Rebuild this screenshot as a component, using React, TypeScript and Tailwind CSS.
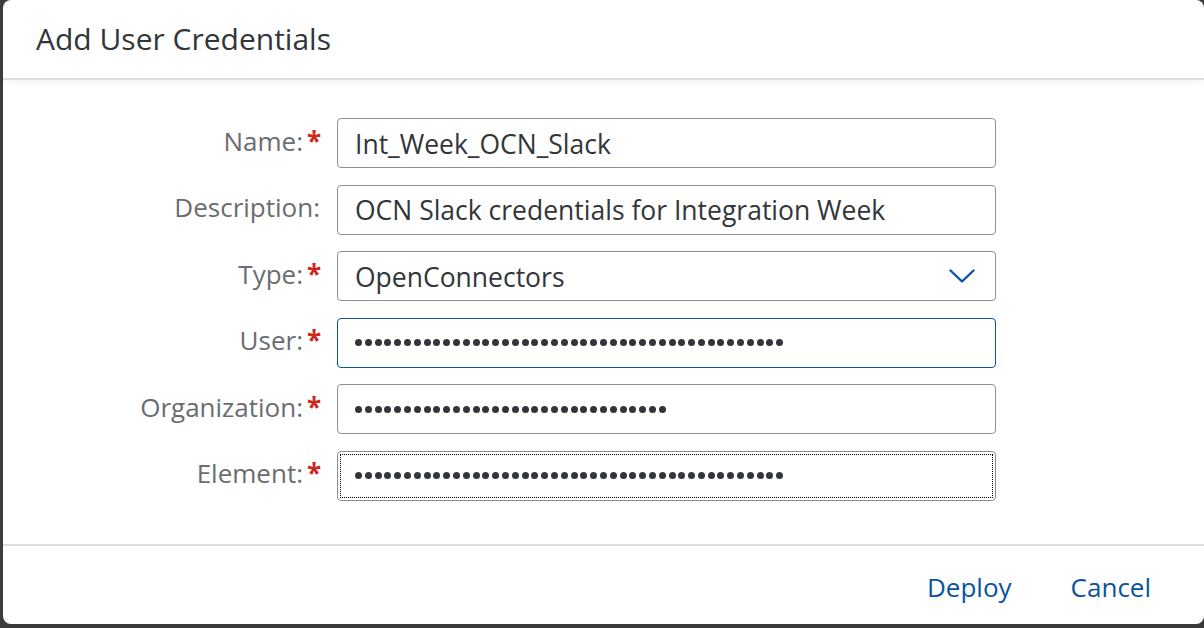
import React from 'react';

// --- form rows ---
interface Field {
  label: string;
  required?: boolean;
  value?: string;
  dots?: number;
  select?: boolean;
  state?: 'focus' | 'active';
}

const fields: Field[] = [
  { label: 'Name:', required: true, value: 'Int_Week_OCN_Slack' },
  { label: 'Description:', value: 'OCN Slack credentials for Integration Week' },
  { label: 'Type:', required: true, value: 'OpenConnectors', select: true },
  { label: 'User:', required: true, dots: 44, state: 'active' },
  { label: 'Organization:', required: true, dots: 32 },
  { label: 'Element:', required: true, dots: 44, state: 'focus' },
];

const Dots = ({ count }: { count: number }) => (
  <div className="flex items-center gap-[2.8px]" aria-label="password">
    {Array.from({ length: count }).map((_, i) => (
      <span key={i} className="w-[7px] h-[7px] rounded-full bg-[#32363a]" />
    ))}
  </div>
);

const Chevron = () => (
  <svg width="26" height="15" viewBox="0 0 26 15" fill="none">
    <path d="M1.5 1.5 L13 12.5 L24.5 1.5" stroke="#0854a0" strokeWidth="2.4" strokeLinecap="round" strokeLinejoin="round" />
  </svg>
);

const FormRow = ({ field }: { field: Field }) => {
  const border = field.state === 'active' ? 'border-[#0854a0]' : 'border-[#89919a]';
  return (
    <div className="flex items-center">
      <div className="w-[317px] flex justify-end items-start pb-[4px] text-[26px] text-[#6a6d70]">
        <span>{field.label}</span>
        {field.required && <span className="w-[17px] pl-[4px] text-[#d0271d] font-bold">*</span>}
      </div>
      <div className={`relative ml-[17px] w-[659px] h-[50px] rounded-[4px] border bg-white flex items-center pl-[17px] pr-[20px] ${border}`}>
        {field.dots ? (
          <Dots count={field.dots} />
        ) : (
          <span className="flex-1 pt-[3px] text-[26.5px] text-[#32363a]">{field.value}</span>
        )}
        {field.select && <Chevron />}
        {field.state === 'focus' && (
          <span className="absolute inset-[2px] border border-dotted border-black pointer-events-none" />
        )}
      </div>
    </div>
  );
};

export default function App() {
  return (
    <div className="w-[1204px] h-[628px] bg-[#3b3b3b] pl-[3px] pb-[4px] font-['Open_Sans',sans-serif]">
      <div className="w-full h-full bg-white rounded-[8px] flex flex-col overflow-hidden">
        {/* Header */}
        <header className="h-[80px] flex items-center pl-[33px] border-b-2 border-[#dcdcdc] shadow-[0_4px_6px_-2px_rgba(0,0,0,0.06)]">
          <h1 className="text-[30px] text-[#32363a] pb-[2px]">Add User Credentials</h1>
        </header>

        {/* Body */}
        <main className="flex-1 flex flex-col gap-[16.5px] pt-[38px]">
          {fields.map((f) => (
            <FormRow key={f.label} field={f} />
          ))}
        </main>

        {/* Footer */}
        <footer className="h-[80px] border-t-2 border-[#dcdcdc] flex items-center justify-end gap-[59px] pr-[53px] pt-[4px]">
          <button className="text-[26px] text-[#0854a0]">Deploy</button>
          <button className="text-[26px] text-[#0854a0]">Cancel</button>
        </footer>
      </div>
    </div>
  );
}
